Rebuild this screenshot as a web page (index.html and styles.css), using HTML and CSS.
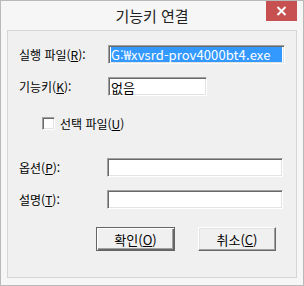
FILE: index.html
```html
<!DOCTYPE html>
<html lang="ko">
<head>
<meta charset="utf-8">
<link rel="stylesheet" href="styles.css">
</head>
<body>
<div class="window">
  <div class="titlebar">
    <span class="title">기능키 연결</span>
    <div class="close">
      <svg width="11" height="10" viewBox="0 0 11 10"><path d="M1.5 1 L9.5 9 M9.5 1 L1.5 9" stroke="#fff" stroke-width="2" fill="none"/></svg>
    </div>
  </div>
  <div class="client">
    <div class="row r1">
      <span class="label">실행 파일(<u>R</u>):</span>
      <div class="field f-long sel"><span class="seltext">G:₩xvsrd-prov4000bt4.exe</span></div>
    </div>
    <div class="row r2">
      <span class="label">기능키(<u>K</u>):</span>
      <div class="field f-short"><span class="val">없음</span></div>
    </div>
    <div class="row r3">
      <span class="check"></span>
      <span class="checklabel">선택 파일(<u>U</u>)</span>
    </div>
    <div class="row r4">
      <span class="label l2">옵션(<u>P</u>):</span>
      <div class="field f-long2"></div>
    </div>
    <div class="row r5">
      <span class="label l2">설명(<u>T</u>):</span>
      <div class="field f-long2"></div>
    </div>
    <div class="buttons">
      <div class="btn default">확인(<u>O</u>)</div>
      <div class="btn">취소(<u>C</u>)</div>
    </div>
  </div>
</div>
</body>
</html>
```
FILE: styles.css
```css
html, body {
  margin: 0;
  padding: 0;
  background: #f0f0f0;
}
body {
  font-family: "Noto Sans CJK KR", "Liberation Sans", sans-serif;
  font-size: 12px;
  color: #000;
}
.window {
  box-sizing: border-box;
  width: 304px;
  height: 286px;
  background: #f6f6f6;
  border: 1px solid #b9b9b9;
  position: relative;
}
.titlebar {
  height: 29px;
  display: flex;
  justify-content: center;
  align-items: center;
}
.title {
  font-size: 15px;
  color: #222;
  margin-top: -1px;
}
.close {
  position: absolute;
  left: 265px;
  top: 0;
  width: 31px;
  height: 20px;
  background: #c75050;
  display: flex;
  align-items: center;
  justify-content: center;
}
.client {
  box-sizing: border-box;
  margin-left: 6px;
  width: 290px;
  height: 248px;
  background: #f0f0f0;
  border: 1px solid #d5d5d5;
  padding-left: 11px;
}
.row {
  display: flex;
  align-items: center;
}
.label {
  width: 89px;
  line-height: 19px;
  white-space: nowrap;
}
.l2 { width: 88px; }
.r1 { margin-top: 14px; }
.r2 { margin-top: 13px; }
.r3 { margin-top: 21px; padding-left: 23px; height: 13px; }
.r4 { margin-top: 28px; }
.r5 { margin-top: 13px; }
.field {
  box-sizing: border-box;
  height: 19px;
  background: #fff;
  border-top: 1px solid #a0a0a0;
  border-left: 1px solid #a0a0a0;
  border-bottom: 1px solid #fff;
  border-right: 1px solid #fff;
  box-shadow: inset 1px 1px 0 #696969, inset -1px -1px 0 #e3e3e3;
  padding: 2px 2px 1px 2px;
  display: flex;
  align-items: center;
  overflow: hidden;
}
.f-long { width: 177px; }
.f-short { width: 99px; }
.f-long2 { width: 176px; }
.sel { padding: 2px 2px 2px 2px; }
.seltext {
  background: #3399ff;
  color: #fff;
  flex: 1;
  height: 15px;
  line-height: 15px;
  font-size: 13px;
  white-space: nowrap;
  letter-spacing: 0.1px;
}
.val {
  line-height: 15px;
  font-size: 13px;
}
.check {
  box-sizing: border-box;
  width: 13px;
  height: 13px;
  background: #fff;
  border-top: 1px solid #a0a0a0;
  border-left: 1px solid #a0a0a0;
  border-bottom: 1px solid #fff;
  border-right: 1px solid #fff;
  box-shadow: inset 1px 1px 0 #696969, inset -1px -1px 0 #e3e3e3;
}
.checklabel {
  margin-left: 5px;
  line-height: 13px;
}
.buttons {
  display: flex;
  margin-top: 18px;
  margin-left: 77px;
  gap: 23px;
}
.btn {
  box-sizing: border-box;
  width: 78px;
  height: 24px;
  background: #f0f0f0;
  border-top: 1px solid #fff;
  border-left: 1px solid #fff;
  border-bottom: 1px solid #696969;
  border-right: 1px solid #696969;
  box-shadow: inset -1px -1px 0 #a0a0a0, inset 1px 1px 0 #e3e3e3;
  display: flex;
  align-items: center;
  justify-content: center;
  font-size: 13px;
}
.btn.default {
  width: 79px;
  border: 1px solid #646464;
  box-shadow: inset 1px 1px 0 #fff, inset -1px -1px 0 #696969, inset -2px -2px 0 #a0a0a0;
}
```
